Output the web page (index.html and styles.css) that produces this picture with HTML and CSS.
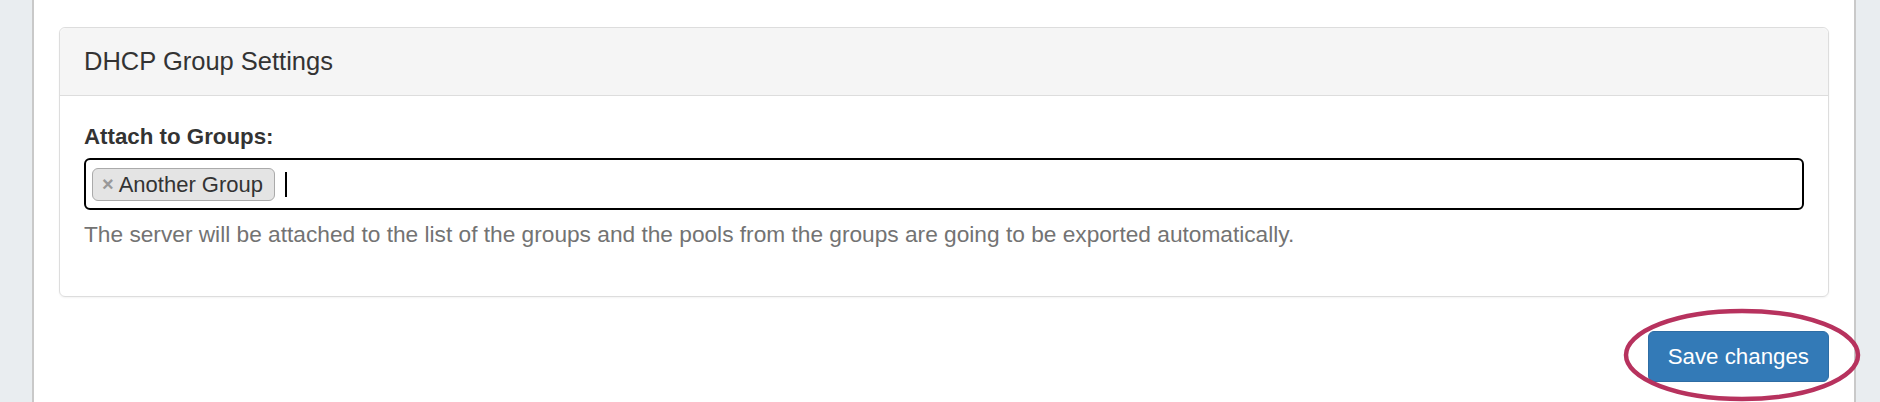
FILE: index.html
```html
<!DOCTYPE html>
<html lang="en">
<head>
  <meta charset="UTF-8" />
  <title>DHCP Server</title>
  <link rel="stylesheet" href="styles.css">
</head>
<body>

  <div class="side side-left"></div>

  <div class="main">
    <div class="panel">
      <div class="panel-heading">DHCP Group Settings</div>
      <div class="panel-body">
        <label>Attach to Groups:</label>
        <div class="tag-input">
          <span class="tag"><span class="tag-remove">×</span>Another Group</span>
          <span class="caret"></span>
        </div>
        <p class="help">The server will be attached to the list of the groups and the pools from the groups are going to be exported automatically.</p>
      </div>
    </div>

    <div class="actions">
      <div class="highlight">
        <button type="button" class="btn">Save changes</button>
        <!-- red ring drawn over the button -->
        <svg class="ring" width="242" height="98" viewBox="0 0 242 98">
          <ellipse cx="120" cy="48" rx="116" ry="44" fill="none" stroke="#b7325e" stroke-width="4.5" />
        </svg>
      </div>
    </div>
  </div>

  <div class="side side-right"></div>

</body>
</html>
```

FILE: styles.css
```css
html, body {
  margin: 0;
  height: 402px;
  overflow: hidden;
}

body {
  display: flex;
  font-family: "Liberation Sans", Arial, sans-serif;
  font-size: 22px;
  color: #333;
  background: #fff;
}

.side {
  background: #e9edf0;
}

.side-left {
  width: 32px;
  border-right: 2px solid #c9c9c9;
}

.side-right {
  width: 24px;
  border-left: 2px solid #c9c9c9;
}

.main {
  flex: 1;
  padding: 27px 25px 0;
}

.panel {
  border: 1px solid #ddd;
  border-radius: 6px;
  box-shadow: 0 1px 2px rgba(0,0,0,0.05);
}

.panel-heading {
  background: #f5f5f5;
  border-bottom: 1px solid #ddd;
  border-radius: 6px 6px 0 0;
  padding: 19px 24px 20px;
  font-size: 25.5px;
  line-height: 28px;
}

.panel-body {
  padding: 25px 24px 24px;
}

label {
  display: block;
  font-weight: bold;
  font-size: 22.3px;
  line-height: 31px;
  margin-bottom: 6px;
}

.tag-input {
  display: flex;
  align-items: center;
  height: 48px;
  border: 2px solid #000;
  border-radius: 6px;
}

.tag {
  display: inline-flex;
  align-items: center;
  height: 31px;
  margin-left: 6px;
  padding: 0 11px 0 9px;
  background: #e4e4e4;
  border: 1px solid #aaa;
  border-radius: 6px;
  line-height: 31px;
}

.tag-remove {
  font-size: 20px;
  font-weight: bold;
  color: #999;
  margin-right: 5px;
}

.caret {
  width: 2px;
  height: 25px;
  margin-left: 10px;
  background: #000;
}

.help {
  margin: 9px 0 22px;
  color: #737373;
  font-size: 22.7px;
  line-height: 31px;
}

.actions {
  display: flex;
  justify-content: flex-end;
  margin-top: 34px;
}

.highlight {
  position: relative;
}

.btn {
  display: block;
  height: 51px;
  padding: 0 19px;
  background: #337ab7;
  border: 1px solid #2e6da4;
  border-radius: 6px;
  color: #fff;
  font-family: inherit;
  font-size: 22.3px;
  cursor: pointer;
}

.ring {
  position: absolute;
  left: -26px;
  top: -24px;
}
```
